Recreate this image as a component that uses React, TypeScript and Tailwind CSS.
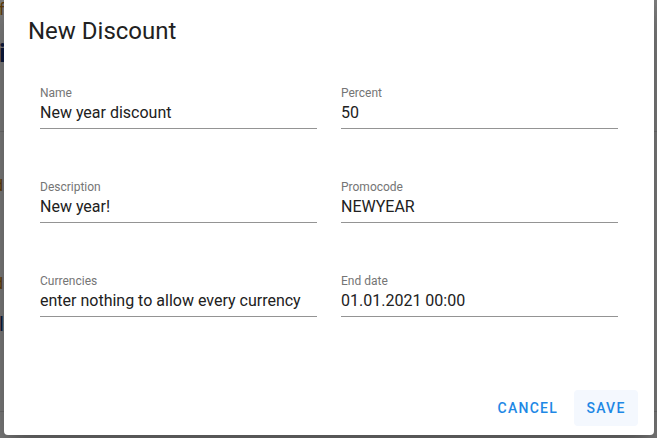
import React from 'react'

type Field = { label: string; value: string }

const fields: Field[] = [
  { label: 'Name', value: 'New year discount' },
  { label: 'Percent', value: '50' },
  { label: 'Description', value: 'New year!' },
  { label: 'Promocode', value: 'NEWYEAR' },
  { label: 'Currencies', value: 'enter nothing to allow every currency' },
  { label: 'End date', value: '01.01.2021 00:00' },
]

function TextField({ label, value }: Field) {
  return (
    <div className="flex flex-col">
      <label className="h-[12px] text-[12px] leading-[12px] text-[#757575]">{label}</label>
      <div className="mt-[4px] pb-[6px] border-b border-[#949494] text-[16px] leading-[19px] text-[#212121] whitespace-nowrap">
        {value}
      </div>
    </div>
  )
}

export default function App() {
  return (
    <div className="relative w-[657px] h-[438px] overflow-hidden bg-white font-['Roboto','Liberation_Sans',sans-serif]">
      {/* page behind the modal */}
      <div className="flex flex-col">
        <div className="h-[132px] border-b border-[#e0e0e0] flex flex-col">
          <span className="-ml-[1px] h-[40px] text-[16px] leading-[20px] text-[#c27a12]">f</span>
          <span className="-ml-[1px] text-[26px] leading-[26px] font-bold text-[#1a3780]">i</span>
        </div>
        <div className="h-[280px] border-b border-[#e0e0e0] flex flex-col pt-[44px]">
          <span className="-ml-[6px] h-[98px] text-[16px] leading-[20px] text-[#c27a12]">d</span>
          <span className="-ml-[6px] h-[38px] text-[16px] leading-[20px] text-[#c27a12]">d</span>
          <span className="-ml-[1px] text-[20px] leading-[24px] text-[#1a3780]">l</span>
        </div>
      </div>

      {/* backdrop */}
      <div className="absolute inset-0 bg-black/50" />

      {/* dialog */}
      <div className="absolute left-[4px] top-[-3px] w-[650px] h-[438px] bg-white rounded-[4px] shadow-[0_11px_15px_-7px_rgba(0,0,0,0.2),0_24px_38px_3px_rgba(0,0,0,0.14),0_9px_46px_8px_rgba(0,0,0,0.12)] flex flex-col">
        <div className="pt-[18px] px-[24px] h-[90px]">
          <h2 className="text-[24px] leading-[32px] font-normal text-[#212121]">New Discount</h2>
        </div>
        <div className="px-[36px] grid grid-cols-2 gap-x-[24px] gap-y-[52px]">
          {fields.map((f) => (
            <TextField key={f.label} {...f} />
          ))}
        </div>
        <div className="mt-auto flex justify-end gap-[8px] pr-[16px] pb-[9px]">
          <button className="h-[36px] min-w-[64px] px-[8px] rounded-[4px] text-[14px] font-medium tracking-[1.25px] text-[#1e88e5]">
            CANCEL
          </button>
          <button className="h-[36px] min-w-[64px] px-[8px] rounded-[4px] text-[14px] font-medium tracking-[1.25px] text-[#1e88e5] bg-[#f4f8fe]">
            SAVE
          </button>
        </div>
      </div>
    </div>
  )
}
